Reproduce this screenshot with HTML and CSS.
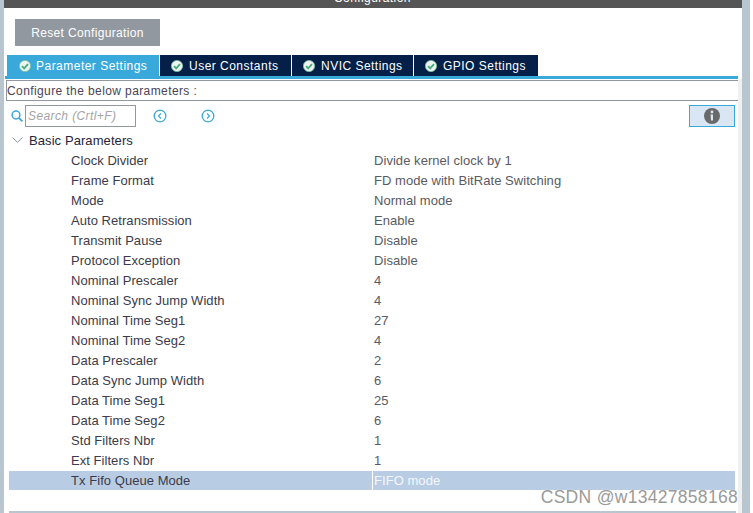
FILE: index.html
```html
<!DOCTYPE html>
<html lang="en">
<head>
<meta charset="utf-8">
<title>Configuration</title>
<link rel="stylesheet" href="styles.css">
</head>
<body>
<div class="frame">
  <div class="edge"></div>
  <main class="main">
    <header class="titlebar"><span class="title">Configuration</span></header>
    <div class="reset-wrap"><button class="reset">Reset Configuration</button></div>
    <nav class="tabs">
      <div class="tab tab-active"><svg class="check" viewBox="0 0 12 12"><circle cx="6" cy="6" r="5.600" fill="#eef5f0" stroke="#79c29f" stroke-width=".8"/><path d="M3 6.100l2.200 2.200L9 4.200" fill="none" stroke="#48ad7e" stroke-width="1.900"/></svg><span>Parameter Settings</span></div>
      <div class="tab tab-user"><svg class="check" viewBox="0 0 12 12"><circle cx="6" cy="6" r="5.600" fill="#eef5f0" stroke="#79c29f" stroke-width=".8"/><path d="M3 6.100l2.200 2.200L9 4.200" fill="none" stroke="#48ad7e" stroke-width="1.900"/></svg><span>User Constants</span></div>
      <div class="tab tab-nvic"><svg class="check" viewBox="0 0 12 12"><circle cx="6" cy="6" r="5.600" fill="#eef5f0" stroke="#79c29f" stroke-width=".8"/><path d="M3 6.100l2.200 2.200L9 4.200" fill="none" stroke="#48ad7e" stroke-width="1.900"/></svg><span>NVIC Settings</span></div>
      <div class="tab tab-gpio"><svg class="check" viewBox="0 0 12 12"><circle cx="6" cy="6" r="5.600" fill="#eef5f0" stroke="#79c29f" stroke-width=".8"/><path d="M3 6.100l2.200 2.200L9 4.200" fill="none" stroke="#48ad7e" stroke-width="1.900"/></svg><span>GPIO Settings</span></div>
    </nav>
    <div class="tab-rule"></div>
    <div class="hint">Configure the below parameters :</div>
    <div class="toolbar">
      <svg class="search-icon" viewBox="0 0 12 12"><circle cx="5" cy="5" r="3.900" fill="none" stroke="#39a9dc" stroke-width="1.500"/><path d="M7.800 7.800L11.400 11.400" stroke="#39a9dc" stroke-width="1.800"/></svg>
      <div class="search">Search (Crtl+F)</div>
      <svg class="nav-icon nav-prev" viewBox="0 0 14 14"><circle cx="7" cy="7" r="5.800" fill="none" stroke="#39a9dc" stroke-width="1.300"/><path d="M8 4.500L5.500 7L8 9.500" fill="none" stroke="#39a9dc" stroke-width="1.200"/></svg>
      <svg class="nav-icon nav-next" viewBox="0 0 14 14"><circle cx="7" cy="7" r="5.800" fill="none" stroke="#39a9dc" stroke-width="1.300"/><path d="M6 4.500L8.500 7L6 9.500" fill="none" stroke="#39a9dc" stroke-width="1.200"/></svg>
      <div class="info"><svg class="info-icon" viewBox="0 0 16 16"><circle cx="8" cy="8" r="8" fill="#696969"/><circle cx="8" cy="4" r="1.400" fill="#dbe8f4"/><path d="M6.600 6.600h2.400v6h-2z" fill="#dbe8f4"/></svg></div>
    </div>
    <div class="group"><svg class="chev" viewBox="0 0 11 6"><path d="M.5.5L5.500 5.300L10.500 .5" fill="none" stroke="#8a8f94" stroke-width="1"/></svg><span>Basic Parameters</span></div>
    <div class="rows">
      <div class="row"><span class="name">Clock Divider</span><span class="val">Divide kernel clock by 1</span></div>
      <div class="row"><span class="name">Frame Format</span><span class="val">FD mode with BitRate Switching</span></div>
      <div class="row"><span class="name">Mode</span><span class="val">Normal mode</span></div>
      <div class="row"><span class="name">Auto Retransmission</span><span class="val">Enable</span></div>
      <div class="row"><span class="name">Transmit Pause</span><span class="val">Disable</span></div>
      <div class="row"><span class="name">Protocol Exception</span><span class="val">Disable</span></div>
      <div class="row"><span class="name">Nominal Prescaler</span><span class="val">4</span></div>
      <div class="row"><span class="name">Nominal Sync Jump Width</span><span class="val">4</span></div>
      <div class="row"><span class="name">Nominal Time Seg1</span><span class="val">27</span></div>
      <div class="row"><span class="name">Nominal Time Seg2</span><span class="val">4</span></div>
      <div class="row"><span class="name">Data Prescaler</span><span class="val">2</span></div>
      <div class="row"><span class="name">Data Sync Jump Width</span><span class="val">6</span></div>
      <div class="row"><span class="name">Data Time Seg1</span><span class="val">25</span></div>
      <div class="row"><span class="name">Data Time Seg2</span><span class="val">6</span></div>
      <div class="row"><span class="name">Std Filters Nbr</span><span class="val">1</span></div>
      <div class="row"><span class="name">Ext Filters Nbr</span><span class="val">1</span></div>
      <div class="row row-selected"><span class="name">Tx Fifo Queue Mode</span><span class="val">FIFO mode</span></div>
    </div>
    <div class="bottom-rule"></div>
    <div class="watermark">CSDN @w13427858168</div>
  </main>
  <div class="gutter"></div>
  <div class="edge edge-right"></div>
</div>
</body>
</html>
```
FILE: styles.css
```css
* { box-sizing: border-box; }
html, body { margin: 0; height: 100%; overflow: hidden; background: #fff; }
body { font-family: "Liberation Sans", Arial, sans-serif; font-size: 13px; color: #3b3b4a; }
.frame { display: flex; width: 750px; height: 513px; }
.edge { width: 4px; flex: none; background: #b9c6cf; }
.edge-right { width: 8px; }
.gutter { width: 4px; flex: none; background: linear-gradient(#555555 0 8px, #fff 8px 79px, #f0f0f0 79px); }
.main { position: relative; flex: 1; min-width: 0; overflow: hidden; }
.titlebar { height: 8px; background: #555555; position: relative; overflow: hidden; }
.title { position: absolute; left: 330px; top: -9px; color: #fff; font-size: 12px; letter-spacing: .42px; line-height: 14px; }
.reset-wrap { padding: 11px 0 0 11px; }
.reset { display: block; width: 145px; height: 27px; padding: 0; border: 0; background: #9298a0; color: #fff; font: 12px "Liberation Sans", Arial, sans-serif; letter-spacing: .35px; }
.tabs { display: flex; margin: 9px 0 0 3px; height: 21px; }
.tab { display: flex; align-items: center; height: 21px; padding-left: 11px; background: #042049; color: #fff; font-size: 12px; letter-spacing: .48px; border-left: 1px solid #fff; }
.tab span { margin-left: 6px; }
.tab-active { width: 152px; padding-left: 12px; background: #39a9dc; border-left: 0; }
.tab-active span { margin-left: 5px; }
.tab-user { width: 132px; }
.tab-nvic { width: 122px; }
.tab-gpio { width: 125px; }
.check { width: 12px; height: 12px; flex: none; }
.tab-rule { height: 4px; margin-left: 1px; background: linear-gradient(#39a9dc 0 3px, #fff 3px); width: 736px; }
.hint { height: 21px; margin-left: 2px; width: 733px; border: 1px solid #9298a0; padding-left: 0; line-height: 20px; font-size: 12px; letter-spacing: .4px; color: #4a4456; }
.toolbar { display: flex; align-items: center; height: 30px; position: relative; }
.search-icon { width: 12px; height: 12px; margin-left: 7px; margin-right: 1px; flex: none; }
.search { width: 111px; height: 22px; margin-left: 1px; border: 1px solid #9298a0; padding-left: 2px; line-height: 20px; font-size: 12px; font-style: italic; color: #a4a4a4; letter-spacing: .4px; white-space: nowrap; }
.nav-icon { width: 14px; height: 14px; flex: none; }
.nav-prev { margin-left: 17px; }
.nav-next { margin-left: 34px; }
.info { position: absolute; left: 685px; top: 4px; width: 46px; height: 22px; background: #d9e7f4; border: 1px solid #39a9dc; display: flex; align-items: center; justify-content: center; }
.info-icon { width: 16px; height: 16px; }
.group { display: flex; align-items: center; height: 20px; padding-bottom: 2px; color: #26263a; letter-spacing: .08px; }
.chev { width: 11px; height: 6px; margin-left: 8px; flex: none; }
.group span { margin-left: 6px; }
.rows { display: flex; flex-direction: column; margin-left: 5px; width: 726px; }
.row { display: flex; height: 20px; line-height: 19px; letter-spacing: .05px; }
.name { width: 363px; padding-left: 62px; flex: none; }
.val { flex: 1; padding-left: 1px; color: #5a5a62; border-left: 1px solid transparent; }
.row-selected { height: 19px; margin-bottom: 1px; background: #b8cde4; }
.row-selected .val { color: #f4f7fb; border-left-color: #fff; }
.bottom-rule { margin: 20px 0 0 5px; width: 727px; height: 2px; background: #b9c6cf; }
.watermark { position: absolute; right: 0; top: 488px; color: #9a9a9a; font-size: 17.5px; line-height: 18px; letter-spacing: .3px; text-shadow: 0 0 1px #fff; white-space: nowrap; }
```
